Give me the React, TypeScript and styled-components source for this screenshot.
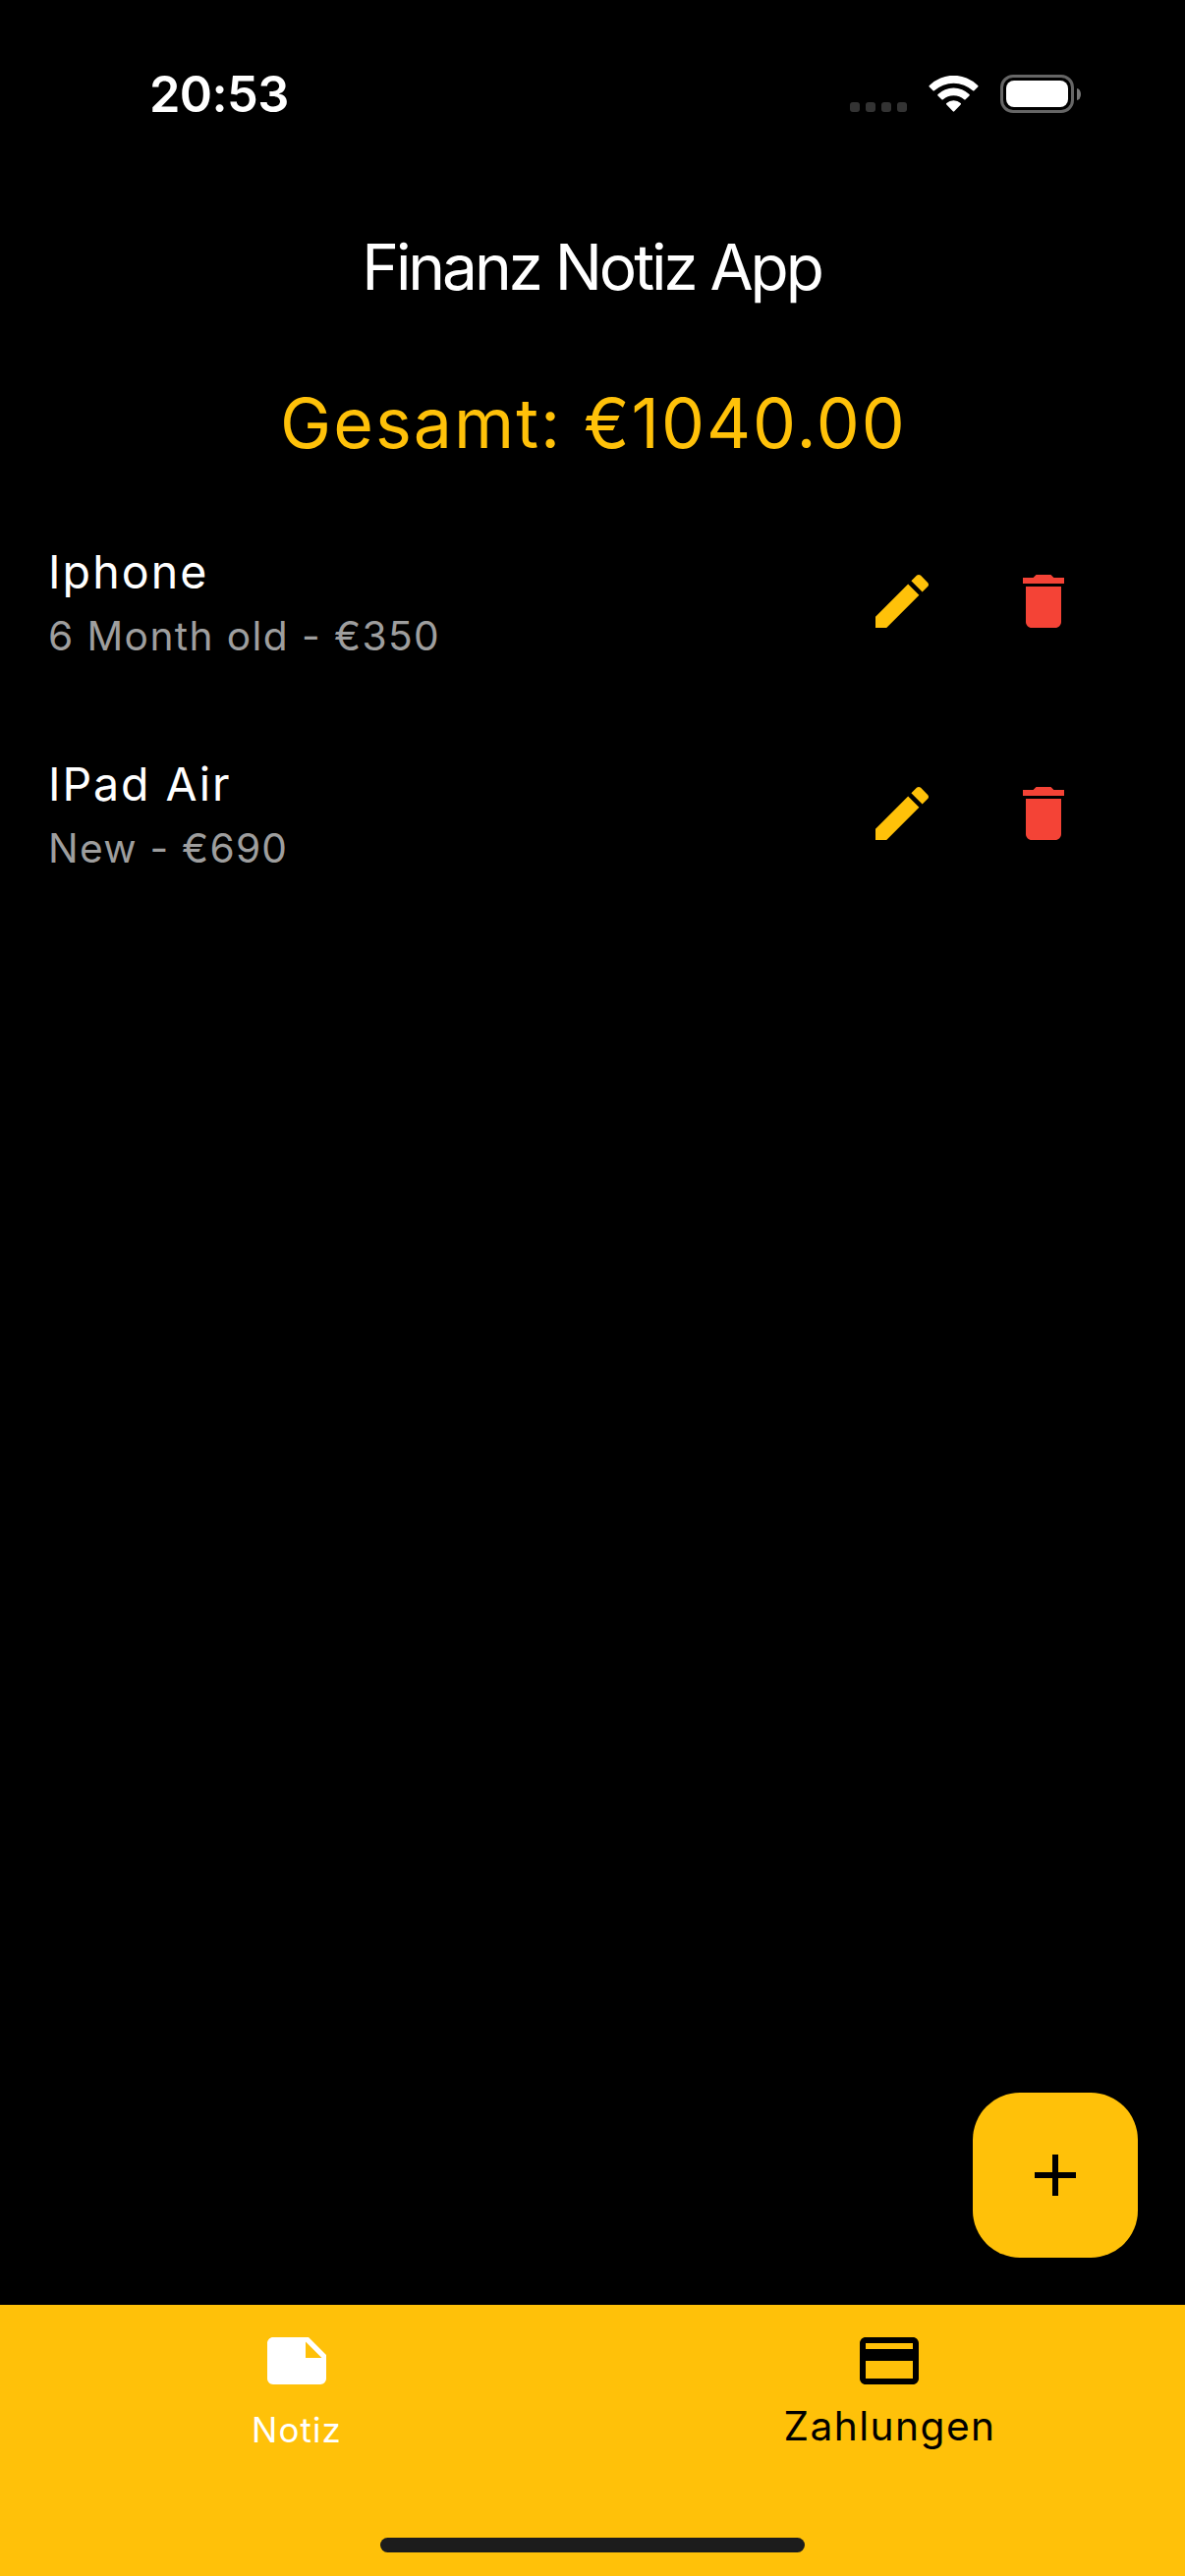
import React from "react";
import styled, { createGlobalStyle } from "styled-components";

const amber = "#ffc109";

const GlobalStyle = createGlobalStyle`
  html, body { margin: 0; background: #000; }
  * { box-sizing: border-box; }
  button { border: 0; padding: 0; margin: 0; background: none; font: inherit; color: inherit; }
`;

const Screen = styled.div`
  display: flex;
  flex-direction: column;
  width: 1206px;
  height: 2622px;
  overflow: hidden;
  background: #000;
  color: #fff;
  font-family: Inter, "Liberation Sans", sans-serif;
  font-weight: 370;
`;

const StatusBar = styled.div`
  display: flex;
  justify-content: space-between;
  align-items: flex-start;
  height: 177px;
  padding: 76px 106px 0 152px;
`;

const Clock = styled.time`
  font-size: 50.5px;
  font-weight: 600;
  line-height: 40px;
  letter-spacing: -0.6px;
`;

const StatusIcons = styled.div`
  display: flex;
  align-items: flex-start;
`;

const SignalDots = styled.div`
  display: flex;
  gap: 6px;
  margin: 28px 22px 0 0;
`;

const Dot = styled.span`
  width: 10px;
  height: 10px;
  border-radius: 3px;
  background: #333;
`;

const WifiSvg = styled.svg`
  display: block;
  width: 51px;
  height: 38px;
  margin: 1px 22px 0 0;
  fill: #fff;
`;

const Battery = styled.div`
  display: flex;
  align-items: center;
  gap: 3px;
`;

const BatteryShell = styled.div`
  width: 75px;
  height: 39px;
  padding: 3px;
  border: 3px solid #666;
  border-radius: 13px;
`;

const BatteryLevel = styled.div`
  width: 63px;
  height: 27px;
  border-radius: 8px;
  background: #fff;
`;

const BatteryTip = styled.div`
  width: 4px;
  height: 12px;
  border-radius: 0 4px 4px 0 / 0 6px 6px 0;
  background: #777;
`;

const TitleBar = styled.header`
  display: flex;
  justify-content: center;
  height: 168px;
  padding: 55px 2px 0 0;
`;

const Title = styled.h1`
  margin: 0;
  font-size: 64px;
  font-weight: 370;
  line-height: 80px;
  letter-spacing: -3.1px;
`;

const Total = styled.div`
  display: flex;
  justify-content: center;
  height: 159px;
  padding: 40px 0 0 2px;
  color: ${amber};
  font-size: 69.8px;
  line-height: 91px;
  letter-spacing: 2.04px;
`;

const List = styled.main`
  display: flex;
  flex-direction: column;
  flex: 1;
`;

const Row = styled.div`
  display: flex;
  align-items: center;
  justify-content: space-between;
  height: 216px;
  padding: 0 108px 0 49px;
`;

const Item = styled.div`
  display: flex;
  flex-direction: column;
  padding-top: 5px;
`;

const ItemName = styled.span<{ $spacing: number }>`
  font-size: 46.5px;
  line-height: 66px;
  letter-spacing: ${(p) => p.$spacing}px;
`;

const ItemNote = styled.span<{ $spacing: number }>`
  color: #9e9e9e;
  font-size: 40.7px;
  line-height: 65px;
  letter-spacing: ${(p) => p.$spacing}px;
`;

const Actions = styled.div`
  display: flex;
  gap: 72px;
`;

const IconButton = styled.button<{ $color: string }>`
  display: flex;
  color: ${(p) => p.$color};
`;

const Icon = styled.svg`
  display: block;
  width: 72px;
  height: 72px;
  fill: currentColor;
`;

const FabArea = styled.div`
  display: flex;
  justify-content: flex-end;
  padding: 0 48px 48px;
`;

const Fab = styled.button`
  display: flex;
  align-items: center;
  justify-content: center;
  width: 168px;
  height: 168px;
  border-radius: 48px;
  background: ${amber};
  color: #000;
`;

const BottomBar = styled.footer`
  display: flex;
  flex-direction: column;
  justify-content: space-between;
  align-items: center;
  height: 276px;
  padding-bottom: 24px;
  background: ${amber};
`;

const Tabs = styled.nav`
  display: flex;
  width: 100%;
`;

const Tab = styled.button<{ $active?: boolean }>`
  display: flex;
  flex: 1;
  flex-direction: column;
  align-items: center;
  padding-top: 21px;
  color: ${(p) => (p.$active ? "#fff" : "#000")};
`;

const TabLabel = styled.span<{ $active?: boolean }>`
  padding-left: ${(p) => (p.$active ? 1 : 2)}px;
  font-size: ${(p) => (p.$active ? 34.9 : 40.7)}px;
  line-height: ${(p) => (p.$active ? 69 : 62)}px;
  letter-spacing: ${(p) => (p.$active ? 1.1 : 1.45)}px;
`;

const HomeIndicator = styled.div`
  width: 432px;
  height: 15px;
  border-radius: 8px;
  background: #1c1c1c;
`;

const paths = {
  edit: "M3 17.25V21h3.75L17.81 9.94l-3.75-3.75L3 17.25zM20.71 7.04c.39-.39.39-1.02 0-1.41l-2.34-2.34c-.39-.39-1.02-.39-1.41 0l-1.83 1.83 3.75 3.75 1.83-1.83z",
  remove: "M6 19c0 1.1.9 2 2 2h8c1.1 0 2-.9 2-2V7H6v12zM19 4h-3.5l-1-1h-5l-1 1H5v2h14V4z",
  add: "M19 13h-6v6h-2v-6H5v-2h6V5h2v6h6v2z",
  note: "M22 10l-6-6H4c-1.1 0-2 .9-2 2v12.01c0 1.1.9 1.99 2 1.99l16-.01c1.1 0 2-.89 2-1.99v-8zm-7-4.5l5.5 5.5H15V5.5z",
  card: "M20 4H4c-1.11 0-1.99.89-1.99 2L2 18c0 1.11.89 2 2 2h16c1.11 0 2-.89 2-2V6c0-1.11-.89-2-2-2zm0 14H4v-6h16v6zm0-10H4V6h16v2z",
};

const Glyph = ({ name }: { name: keyof typeof paths }) => (
  <Icon viewBox="0 0 24 24" aria-hidden="true">
    <path d={paths[name]} />
  </Icon>
);

const items = [
  { name: "Iphone", note: "6 Month old - €350", nameSpacing: 2.1, noteSpacing: 1.39 },
  { name: "IPad Air", note: "New - €690", nameSpacing: 1.94, noteSpacing: 1.25 },
];

export default function App() {
  return (
    <>
      <GlobalStyle />
      <Screen>
        <StatusBar>
          <Clock>20:53</Clock>
          <StatusIcons>
            <SignalDots>
              <Dot />
              <Dot />
              <Dot />
              <Dot />
            </SignalDots>
            <WifiSvg viewBox="0 0 51 38" aria-hidden="true">
              <path d="M.8 10A35 35 0 0 1 50.2 10Q51 10.8 50.2 11.5L46.4 15.3Q45.8 15.9 45.1 15.3A29 29 0 0 0 5.9 15.3Q5.2 15.9 4.6 15.3L.8 11.5Q0 10.8 .8 10Z" />
              <path d="M9.5 19A22.8 22.8 0 0 1 41.5 19Q42.2 19.7 41.5 20.4L37.6 24.3Q36.9 24.9 36.2 24.3A15.8 15.8 0 0 0 14.8 24.3Q14.1 24.9 13.4 24.3L9.5 20.4Q8.8 19.7 9.5 19Z" />
              <path d="M18.3 28.1A10.7 10.7 0 0 1 32.7 28.1Q33.4 28.8 32.7 29.5L26.2 36.3Q25.5 37 24.8 36.3L18.3 29.5Q17.6 28.8 18.3 28.1Z" />
            </WifiSvg>
            <Battery>
              <BatteryShell>
                <BatteryLevel />
              </BatteryShell>
              <BatteryTip />
            </Battery>
          </StatusIcons>
        </StatusBar>
        <TitleBar>
          <Title>Finanz Notiz App</Title>
        </TitleBar>
        <Total>Gesamt: €1040.00</Total>
        <List>
          {items.map((item) => (
            <Row key={item.name}>
              <Item>
                <ItemName $spacing={item.nameSpacing}>{item.name}</ItemName>
                <ItemNote $spacing={item.noteSpacing}>{item.note}</ItemNote>
              </Item>
              <Actions>
                <IconButton $color={amber} aria-label="Bearbeiten">
                  <Glyph name="edit" />
                </IconButton>
                <IconButton $color="#f44336" aria-label="Löschen">
                  <Glyph name="remove" />
                </IconButton>
              </Actions>
            </Row>
          ))}
        </List>
        <FabArea>
          <Fab aria-label="Hinzufügen">
            <Glyph name="add" />
          </Fab>
        </FabArea>
        <BottomBar>
          <Tabs>
            <Tab $active>
              <Glyph name="note" />
              <TabLabel $active>Notiz</TabLabel>
            </Tab>
            <Tab>
              <Glyph name="card" />
              <TabLabel>Zahlungen</TabLabel>
            </Tab>
          </Tabs>
          <HomeIndicator />
        </BottomBar>
      </Screen>
    </>
  );
}
